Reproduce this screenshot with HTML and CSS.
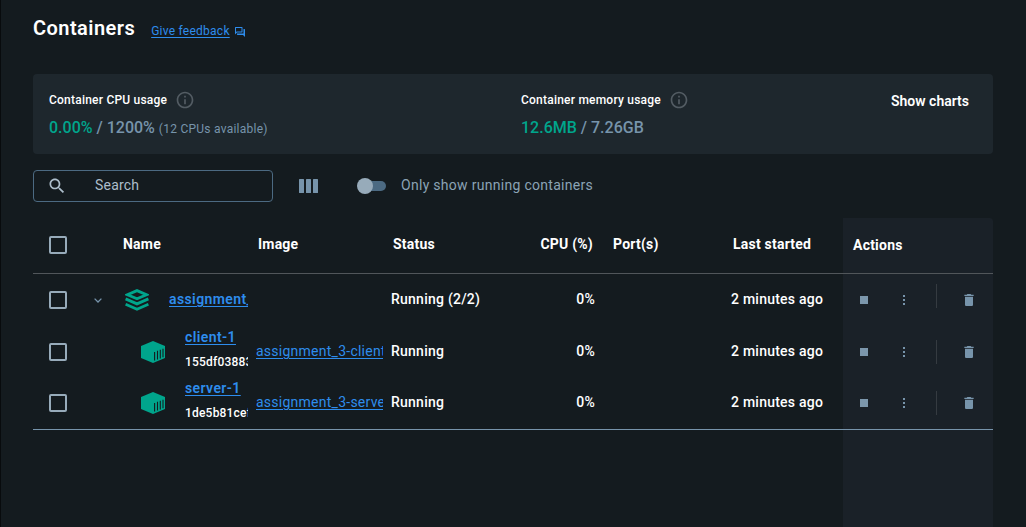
FILE: index.html
```html
<!DOCTYPE html>
<html lang="en">
<head>
<meta charset="utf-8">
<title>Containers</title>
<link rel="stylesheet" href="styles.css">
</head>
<body>
<svg class="defs" width="0" height="0" aria-hidden="true">
  <symbol id="info" viewBox="0 0 24 24"><path d="M11 7h2v2h-2zm0 4h2v6h-2zm1-9C6.48 2 2 6.48 2 12s4.480 10 10 10 10-4.480 10-10S17.520 2 12 2zm0 18c-4.410 0-8-3.590-8-8s3.590-8 8-8 8 3.590 8 8-3.590 8-8 8z"/></symbol>
  <symbol id="stack" viewBox="0 0 24 22"><path d="M12 1.600 2.500 5.700 12 9.800l9.500-4.100z M.6 9.900 12 14.900l11.400-5M.6 15.200 12 20.200l11.400-5" fill="none" stroke="currentColor" stroke-width="2.800"/></symbol>
  <symbol id="box" viewBox="0 0 24 22"><path d="M12 0 24 5v12l-12 5L0 17V5z"/><path d="M13.600 11v8.500M16.500 9.800v8.700M19.300 8.800v8.600M22 7.800v8.500" stroke="#141b1f" stroke-width="1.100"/></symbol>
  <symbol id="dots" viewBox="0 0 16 16"><path d="M7 3h2v2H7zm0 4h2v2H7zm0 4h2v2H7z"/></symbol>
  <symbol id="trash" viewBox="0 0 24 24"><path d="M6 19c0 1.100.9 2 2 2h8c1.100 0 2-.9 2-2V7H6v12zM19 4h-3.500l-1-1h-5l-1 1H5v2h14V4z"/></symbol>
</svg>
<main class="page">
  <header class="head">
    <h1 class="title">Containers</h1>
    <a class="feedback"><span class="feedback-text">Give feedback</span><svg class="feedback-icon" viewBox="0 0 24 24"><path d="M15 4v7H5.170L4 12.170V4h11m1-2H3c-.55 0-1 .45-1 1v14l4-4h10c.55 0 1-.45 1-1V3c0-.55-.45-1-1-1zm5 4h-2v9H6v2c0 .55.45 1 1 1h11l4 4V7c0-.55-.45-1-1-1z"/></svg></a>
  </header>
  <section class="usage">
    <div class="metric">
      <div class="metric-label">Container CPU usage<svg class="info"><use href="#info"/></svg></div>
      <div class="metric-value"><span class="used">0.00%</span> / 1200% <small class="note">(12 CPUs available)</small></div>
    </div>
    <div class="metric">
      <div class="metric-label">Container memory usage<svg class="info"><use href="#info"/></svg></div>
      <div class="metric-value"><span class="used">12.6MB</span> / 7.26GB</div>
    </div>
    <div class="charts">Show charts</div>
  </section>
  <div class="tools">
    <div class="search"><svg class="search-icon" viewBox="0 0 24 24"><path d="M15.500 14h-.79l-.28-.27C15.410 12.590 16 11.110 16 9.500 16 5.910 13.090 3 9.500 3S3 5.910 3 9.500 5.910 16 9.500 16c1.610 0 3.090-.59 4.230-1.570l.27.28v.79l5 4.990L20.490 19l-4.990-5zm-6 0C7.010 14 5 11.990 5 9.500S7.010 5 9.500 5 14 7.010 14 9.500 11.990 14 9.500 14z"/></svg><span class="search-text">Search</span></div>
    <svg class="columns" viewBox="0 0 19 14"><rect width="5" height="14" rx=".5"/><rect x="7" width="5" height="14" rx=".5"/><rect x="14" width="5" height="14" rx=".5"/></svg>
    <span class="switch"><span class="knob"></span></span>
    <span class="switch-label">Only show running containers</span>
  </div>
  <section class="table">
    <div class="row row-head">
      <div class="cell check-cell"><span class="check"></span></div><div></div>
      <div class="cell">Name</div><div class="cell">Image</div><div class="cell">Status</div><div class="cell right">CPU (%)</div><div class="cell">Port(s)</div><div class="cell">Last started</div><div class="cell actions-title">Actions</div>
    </div>
    <div class="row">
      <div class="cell check-cell"><span class="check"></span></div>
      <div class="expander"><svg class="chevron" viewBox="0 0 8 5"><path d="m.6.6 3.400 3.400L7.400.6" fill="none" stroke="currentColor" stroke-width="1.300"/></svg></div>
      <div class="cell name"><svg class="glyph"><use href="#stack"/></svg><a class="link strong">assignment_3</a></div>
      <div></div>
      <div class="cell">Running (2/2)</div><div class="cell right">0%</div><div></div><div class="cell">2 minutes ago</div>
      <div class="actions"><span class="stop"></span><svg class="dots"><use href="#dots"/></svg><span class="rule rule-high"></span><svg class="trash"><use href="#trash"/></svg></div>
    </div>
    <div class="row">
      <div class="cell check-cell"><span class="check"></span></div><div></div>
      <div class="cell name child"><svg class="glyph"><use href="#box"/></svg><div class="ident"><a class="link strong">client-1</a><span class="hash">155df0388342</span></div></div>
      <div class="cell"><a class="link">assignment_3-client</a></div>
      <div class="cell">Running</div><div class="cell right">0%</div><div></div><div class="cell">2 minutes ago</div>
      <div class="actions"><span class="stop"></span><svg class="dots"><use href="#dots"/></svg><span class="rule"></span><svg class="trash"><use href="#trash"/></svg></div>
    </div>
    <div class="row row-last">
      <div class="cell check-cell"><span class="check"></span></div><div></div>
      <div class="cell name child"><svg class="glyph"><use href="#box"/></svg><div class="ident"><a class="link strong">server-1</a><span class="hash">1de5b81cef20</span></div></div>
      <div class="cell"><a class="link">assignment_3-server</a></div>
      <div class="cell">Running</div><div class="cell right">0%</div><div></div><div class="cell">2 minutes ago</div>
      <div class="actions"><span class="stop"></span><svg class="dots"><use href="#dots"/></svg><span class="rule"></span><svg class="trash"><use href="#trash"/></svg></div>
    </div>
  </section>
</main>
</body>
</html>
```
FILE: styles.css
```css
* { box-sizing: border-box; }
body { margin: 0; background: #141b1f; color: #fff; font: 500 14px/20px Roboto, sans-serif; }
svg { display: block; flex: none; fill: currentColor; }
.defs { position: absolute; }
.page { width: 1026px; height: 527px; padding: 0 33px 0 32px; border-left: 1px solid #080b0d; overflow: hidden; display: flex; flex-direction: column; }
.head { height: 74px; padding-top: 14px; display: flex; align-items: flex-start; gap: 16px; }
.title { margin: 0; font-size: 20px; line-height: 28px; font-weight: 600; letter-spacing: .45px; }
.feedback { display: flex; align-items: center; gap: 4px; padding-top: 7px; font-size: 12px; font-weight: 400; color: #2e8ded; letter-spacing: .25px; }
.feedback-text { text-decoration: underline; text-underline-offset: 2px; }
.feedback-icon { width: 12px; height: 12px; margin-top: 1px; }
.usage { height: 80px; background: #1e272d; border-radius: 4px; padding: 16px 24px 0 16px; display: grid; grid-template-columns: 472px 1fr auto; }
.metric-label { display: flex; align-items: center; gap: 8px; height: 20px; font-size: 12px; letter-spacing: .22px; }
.info { width: 20px; height: 20px; color: #535c63; }
.metric-value { margin-top: 6px; line-height: 24px; font-size: 16px; color: #7794ab; }
.used { color: #00a58c; }
.note { font-size: 12px; font-weight: 400; letter-spacing: .25px; }
.charts { padding-top: 1px; font-weight: 600; }
.tools { height: 64px; padding-top: 16px; display: flex; align-items: flex-start; }
.search { width: 240px; height: 32px; border: 1px solid #4c6a82; border-radius: 4px; display: flex; align-items: center; padding: 0 13px; color: #adbecb; font-weight: 400; }
.search-icon { width: 20px; height: 20px; margin-top: -1px; }
.search-text { margin: -2px 0 0 28px; letter-spacing: .2px; }
.columns { width: 19px; height: 14px; margin: 9px 0 0 26px; color: #7794ab; }
.switch { width: 27px; height: 10px; margin: 11px 0 0 41px; border-radius: 5px; background: #4c6a82; display: flex; align-items: center; }
.knob { width: 16px; height: 16px; margin-left: -2px; border-radius: 50%; background: #97abba; flex: none; }
.switch-label { margin: 5px 0 0 15px; color: #8ba3b5; font-weight: 400; letter-spacing: .29px; }
.table { flex: 1; background: linear-gradient(#1a2128, #1a2128) right top / 150px 100% no-repeat; border-radius: 0 4px 0 0; }
.row { display: grid; grid-template-columns: 50px 30px 135px 135px 140px 80px 120px 120px 150px; height: 52px; align-items: center; }
.row-head { height: 56px; padding-bottom: 2px; border-bottom: 1px solid #51565a; font-weight: 700; letter-spacing: .22px; }
.row-last { padding-bottom: 1px; border-bottom: 1px solid #7794ab; }
.cell { padding-left: 8px; overflow: hidden; white-space: nowrap; margin-top: -2px; }
.row:not(.row-head) { letter-spacing: .24px; }
.row-head .cell { padding-left: 10px; }
.row-head .right { padding-right: 10px; }
.row-head .actions-title { margin-top: 0; }
.row .check-cell { padding: 0 0 0 16px; margin: 0; }
.check { display: block; width: 18px; height: 18px; border: 2px solid #97abba; border-radius: 2px; }
.right { text-align: right; padding-right: 8px; }
.expander { display: flex; justify-content: center; color: #7794ab; }
.chevron { width: 8px; height: 5px; }
.name { display: flex; align-items: center; gap: 20px; padding-left: 12px; }
.child { padding-left: 28px; gap: 20px; margin: 0; }
.glyph { width: 24px; height: 22px; color: #00a58c; margin-top: 2px; }
.child .glyph { margin-top: 0; }
.link { color: #2e8ded; font-weight: 400; text-decoration: underline; text-underline-offset: 2px; letter-spacing: .25px; }
.strong { font-weight: 600; letter-spacing: .4px; }
.ident { display: flex; flex-direction: column; }
.ident .link { line-height: 20px; }
.hash { line-height: 30px; font-size: 12px; letter-spacing: .2px; }
.actions { display: flex; align-items: center; height: 100%; color: #7794ab; }
.stop { width: 8px; height: 8px; margin-left: 17px; background: #7c97ac; }
.dots { width: 16px; height: 16px; margin-left: 28px; }
.rule { width: 1px; height: 24px; margin-left: 24px; background: #353b41; }
.rule-high { margin-bottom: 8px; }
.trash { width: 16px; height: 16px; margin-left: 24px; }
```
